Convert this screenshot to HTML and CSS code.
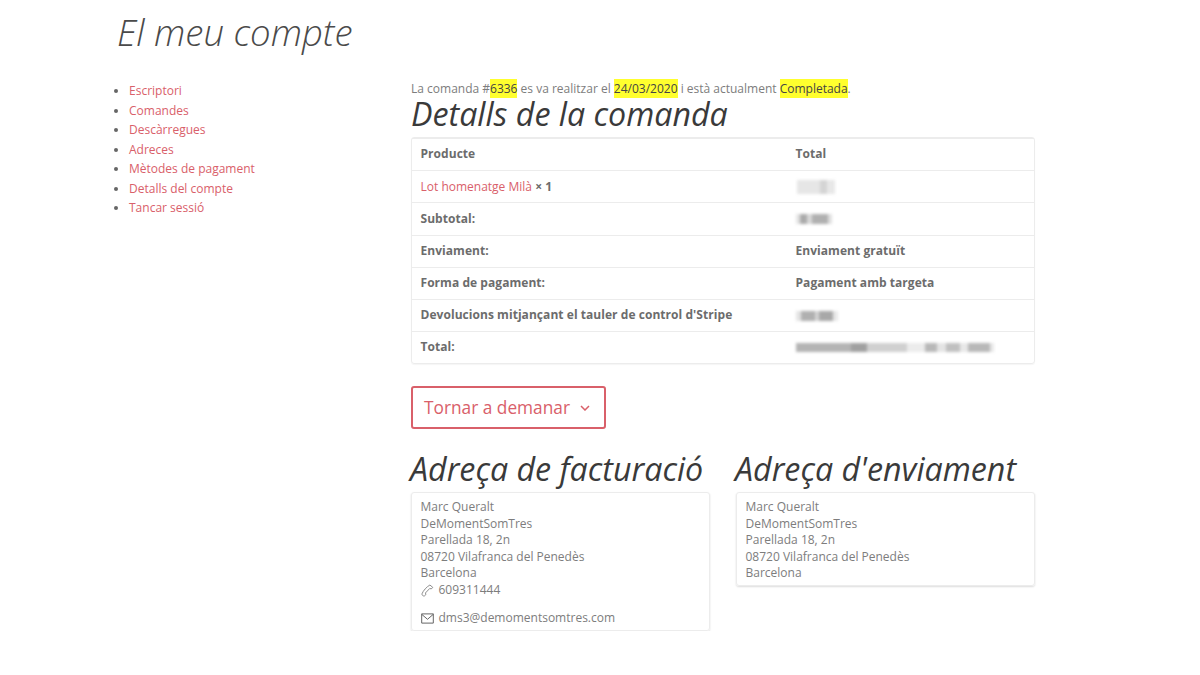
FILE: index.html
```html
<!DOCTYPE html>
<html lang="ca">
<head>
<meta charset="utf-8">
<title>El meu compte</title>
<link rel="stylesheet" href="styles.css">
</head>
<body>
<main class="page">
  <h1 class="page-title">El meu compte</h1>
  <div class="account">
    <nav class="account-nav">
      <ul>
        <li><a href="#">Escriptori</a></li>
        <li><a href="#">Comandes</a></li>
        <li><a href="#">Descàrregues</a></li>
        <li><a href="#">Adreces</a></li>
        <li><a href="#">Mètodes de pagament</a></li>
        <li><a href="#">Detalls del compte</a></li>
        <li><a href="#">Tancar sessió</a></li>
      </ul>
    </nav>
    <section class="order">
      <p class="order-status">La comanda #<mark>6336</mark> es va realitzar el <mark>24/03/2020</mark> i està actualment <mark>Completada</mark>.</p>
      <h2 class="section-title">Detalls de la comanda</h2>
      <table class="order-table">
        <tr class="row"><th class="col-a">Producte</th><th>Total</th></tr>
        <tr class="row"><td class="col-a"><a href="#">Lot homenatge Milà</a> <strong>× 1</strong></td><td><span class="blur blur-price"></span></td></tr>
        <tr class="row"><th class="col-a">Subtotal:</th><td><span class="blur blur-sub"></span></td></tr>
        <tr class="row"><th class="col-a">Enviament:</th><th>Enviament gratuït</th></tr>
        <tr class="row"><th class="col-a">Forma de pagament:</th><th>Pagament amb targeta</th></tr>
        <tr class="row"><th class="col-a">Devolucions mitjançant el tauler de control d'Stripe</th><td><span class="blur blur-refund"></span></td></tr>
        <tr class="row"><th class="col-a">Total:</th><td><span class="blur blur-total"></span></td></tr>
      </table>
      <a class="again" href="#">Tornar a demanar
        <svg class="chev" width="10" height="6" viewBox="0 0 10 6" aria-hidden="true"><path d="M1 1l4 4 4-4" fill="none" stroke="currentColor" stroke-width="1.5"/></svg>
      </a>
      <div class="addresses">
        <div class="address">
          <h2 class="section-title">Adreça de facturació</h2>
          <address class="card">
            Marc Queralt<br>DeMomentSomTres<br>Parellada 18, 2n<br>08720 Vilafranca del Penedès<br>Barcelona
            <span class="contact">
              <svg width="13" height="13" viewBox="0 0 13 13" aria-hidden="true"><path d="M8.900 1L11.800 3.400 10.200 5 8.800 4.400 4.400 9 5 10.400 3.300 12C2 12.200 .8 11 1 9.800 2.200 6.600 5.700 2.800 8.900 1z" fill="none" stroke="#808080" stroke-width=".9" stroke-linejoin="round"/></svg>
              609311444
            </span>
            <span class="contact contact-mail">
              <svg width="13" height="11" viewBox="0 0 13 11" aria-hidden="true"><path d="M.7.900h11.600v9.200H.7zM.7 1.300l5.800 5 5.800-5" fill="none" stroke="#666" stroke-width="1"/></svg>
              dms3@demomentsomtres.com
            </span>
          </address>
        </div>
        <div class="address">
          <h2 class="section-title">Adreça d'enviament</h2>
          <address class="card">
            Marc Queralt<br>DeMomentSomTres<br>Parellada 18, 2n<br>08720 Vilafranca del Penedès<br>Barcelona
          </address>
        </div>
      </div>
    </section>
  </div>
</main>
</body>
</html>
```
FILE: styles.css
```css
* { box-sizing: border-box; }
html, body { margin: 0; padding: 0; background: #fff; }
body {
  font-family: "Open Sans", sans-serif;
  font-size: 12px;
  line-height: 16.500px;
  color: #7d7d7d;
}
a { color: #d9606a; text-decoration: none; }
.page { width: 918px; margin-left: 117px; }
.page-title {
  margin: 0;
  padding-top: 8px;
  height: 81px;
  font-size: 36.600px;
  line-height: 48px;
  font-weight: 300;
  font-style: italic;
  color: #4a4a4a;
}
.account { display: grid; grid-template-columns: 294px 624px; }
.account-nav ul { margin: 0; padding: 0 0 0 12px; list-style: disc; }
.account-nav li { line-height: 19.500px; color: #666; }
.order-status { margin: 0; height: 17px; }
mark { background: #ffff2e; color: #444; padding: 1px 0; }
.section-title {
  margin: 0;
  font-size: 32.200px;
  line-height: 32px;
  font-weight: 400;
  font-style: italic;
  color: #3a3a3a;
}
.order-table {
  width: 624px;
  margin-top: 7px;
  border-collapse: separate;
  border-spacing: 0;
  border: 1px solid #ececec;
  border-radius: 3px;
  box-shadow: 0 1px 1px rgba(0,0,0,.04);
}
.row th, .row td {
  height: 32.200px;
  padding: 0 9px 0 8.500px;
  text-align: left;
  font-weight: 400;
  border-top: 1px solid #ececec;
}
.row th, .row strong { font-weight: 700; color: #6c6c6c; letter-spacing: .05px; }
.col-a { width: 375px; }
.blur { display: block; filter: blur(1.500px); }
.blur-price {
  width: 38px; height: 14px; margin-left: 1px;
  background: linear-gradient(90deg, #e6e6e6 0 60%, #d4d4d4 60% 80%, #e8e8e8 80% 100%);
}
.blur-sub {
  width: 36px; height: 10px;
  background: linear-gradient(90deg, #e4e4e4 0 12%, #aaa 12% 30%, #d8d8d8 30% 45%, #b0b0b0 45% 88%, #e0e0e0 88% 100%);
}
.blur-refund {
  width: 42px; height: 10px;
  background: linear-gradient(90deg, #e4e4e4 0 12%, #b0b0b0 12% 45%, #d4d4d4 45% 55%, #a8a8a8 55% 88%, #e8e8e8 88% 100%);
}
.blur-total {
  width: 198px; height: 9px;
  background: linear-gradient(90deg, #b4b4b4 0 28%, #a0a0a0 28% 36%, #d0d0d0 36% 56%, #ececec 56% 65%, #b8b8b8 65% 71%, #e4e4e4 71% 76%, #c0c0c0 76% 83%, #e8e8e8 83% 87%, #b8b8b8 87% 98%, #e8e8e8 98% 100%);
}
.again {
  display: inline-flex;
  align-items: center;
  gap: 10px;
  height: 43px;
  margin-top: 22px;
  padding: 0 14px 0 11px;
  border: 2px solid #d9606a;
  border-radius: 3px;
  font-size: 17.300px;
  color: #d9606a;
}
.chev { color: #d9606a; }
.addresses { display: grid; grid-template-columns: 299px 299px; gap: 26px; margin-top: 21px; }
.address .section-title { white-space: nowrap; margin-left: -1px; height: 42px; line-height: 38px; }
.card {
  display: block;
  padding: 6px 9px 3px 8.500px;
  font-style: normal;
  border: 1px solid #ececec;
  border-radius: 3px;
  box-shadow: 0 1px 2px rgba(0,0,0,.14);
}
.contact { display: flex; align-items: center; gap: 5px; }
.contact-mail { margin-top: 12px; }
```
